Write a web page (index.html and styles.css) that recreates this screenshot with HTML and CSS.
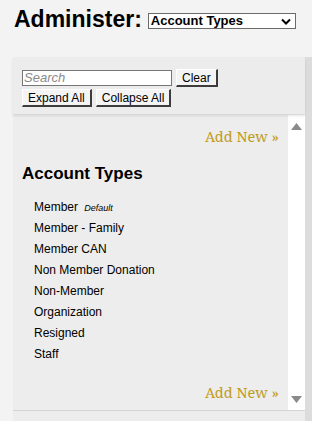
FILE: index.html
```html
<!DOCTYPE html>
<html>
<head>
<meta charset="utf-8">
<link rel="stylesheet" href="styles.css">
</head>
<body>
<header class="top">
  <h1 class="title">Administer:</h1>
  <div class="select">
    <span class="select-text">Account Types</span>
    <svg class="chev" width="10" height="7" viewBox="0 0 10 7"><path d="M1 1.5 L5 5.5 L9 1.5" fill="none" stroke="#000" stroke-width="2"/></svg>
  </div>
</header>
<div class="workspace">
  <div class="panel">
    <div class="toolbar">
      <div class="row">
        <div class="search">Search</div>
        <button class="btn">Clear</button>
      </div>
      <div class="row">
        <button class="btn">Expand All</button>
        <button class="btn">Collapse All</button>
      </div>
    </div>
    <div class="scroller">
      <div class="content">
        <div class="addnew">Add New »</div>
        <h2 class="heading">Account Types</h2>
        <ul class="list">
          <li>Member <em class="def">Default</em></li>
          <li>Member - Family</li>
          <li>Member CAN</li>
          <li>Non Member Donation</li>
          <li>Non-Member</li>
          <li>Organization</li>
          <li>Resigned</li>
          <li>Staff</li>
        </ul>
        <div class="addnew bottom">Add New »</div>
      </div>
      <div class="scrollbar">
        <svg width="11" height="7" viewBox="0 0 11 7"><path d="M0 7 L5.5 0 L11 7 Z" fill="#8a8a8a"/></svg>
        <svg width="11" height="7" viewBox="0 0 11 7"><path d="M0 0 L5.5 7 L11 0 Z" fill="#8a8a8a"/></svg>
      </div>
    </div>
    <div class="footer"></div>
  </div>
  <div class="strip"></div>
</div>
</body>
</html>
```
FILE: styles.css
```css
html, body {
  margin: 0;
  padding: 0;
  height: 100%;
  overflow: hidden;
}
body {
  background: #f3f3f3;
  font-family: "Liberation Sans", Arial, sans-serif;
  color: #000;
}
.top {
  display: flex;
  align-items: center;
  padding: 0 0 0 14px;
  height: 38px;
}
.title {
  margin: 0;
  font-size: 23px;
  font-weight: bold;
}
.select {
  margin-left: 6px;
  margin-top: 4px;
  height: 14px;
  border: 1px solid #6b6b6b;
  background: #fff;
  display: flex;
  align-items: center;
  justify-content: space-between;
  padding: 0 4px 0 2px;
  width: 140px;
}
.select-text {
  font-size: 13px;
  font-weight: bold;
  line-height: 14px;
}
.chev { margin-top: 1px; }
.workspace {
  display: flex;
  margin-top: 19px;
  margin-left: 13px;
  height: calc(100% - 57px);
}
.panel {
  width: 292px;
  display: flex;
  flex-direction: column;
  background: #ededed;
}
.strip {
  width: 7px;
  background: #dcdcdc;
}
.toolbar {
  background: #ececec;
  padding: 12px 9px 7px 9px;
  height: 38px;
  border-top-left-radius: 3px;
  box-shadow: 0 2px 3px rgba(0,0,0,0.10);
  position: relative;
  z-index: 1;
  display: flex;
  flex-direction: column;
  gap: 2px;
}
.row {
  display: flex;
  gap: 4px;
  align-items: center;
}
.search {
  width: 146px;
  height: 14px;
  border: 1px solid #767676;
  background: #fff;
  padding: 0 1px;
  font-size: 13px;
  line-height: 14px;
  font-style: italic;
  color: #8a8a8a;
}
.btn {
  font-family: "Liberation Sans", Arial, sans-serif;
  font-size: 12px;
  line-height: 15px;
  padding: 1px 5px 0 5px;
  height: 18px;
  background: #f4f4f4;
  color: #000;
  border: 1px solid;
  border-color: #fff #3c3c3c #3c3c3c #fff;
  border-width: 1px 2px 2px 1px;
  border-radius: 0;
}
.scroller {
  display: flex;
  height: 295px;
  margin-top: 1px;
}
.content {
  flex: 1;
  padding: 0 9px 0 9px;
}
.addnew {
  text-align: right;
  font-family: "Noto Serif", "DejaVu Serif", "Liberation Serif", serif;
  font-size: 14.5px;
  color: #c09c1c;
  margin-top: 12px;
  line-height: 18px;
}
.addnew.bottom { margin-top: 18px; }
.heading {
  margin: 19px 0 0 0;
  font-size: 17px;
  font-weight: bold;
  line-height: 20px;
}
.list {
  list-style: none;
  margin: 13px 0 0 0;
  padding: 0 0 0 12px;
}
.list li {
  font-size: 12px;
  line-height: 21px;
  height: 21px;
}
.def {
  font-size: 9px;
  margin-left: 3px;
}
.scrollbar {
  width: 17px;
  background: #fff;
  display: flex;
  flex-direction: column;
  justify-content: space-between;
  align-items: center;
  padding: 8px 0 7px 0;
  box-sizing: border-box;
}
.footer {
  flex: 1;
  border-top: 1px solid #d4d4d4;
  background: #ededed;
}
```
